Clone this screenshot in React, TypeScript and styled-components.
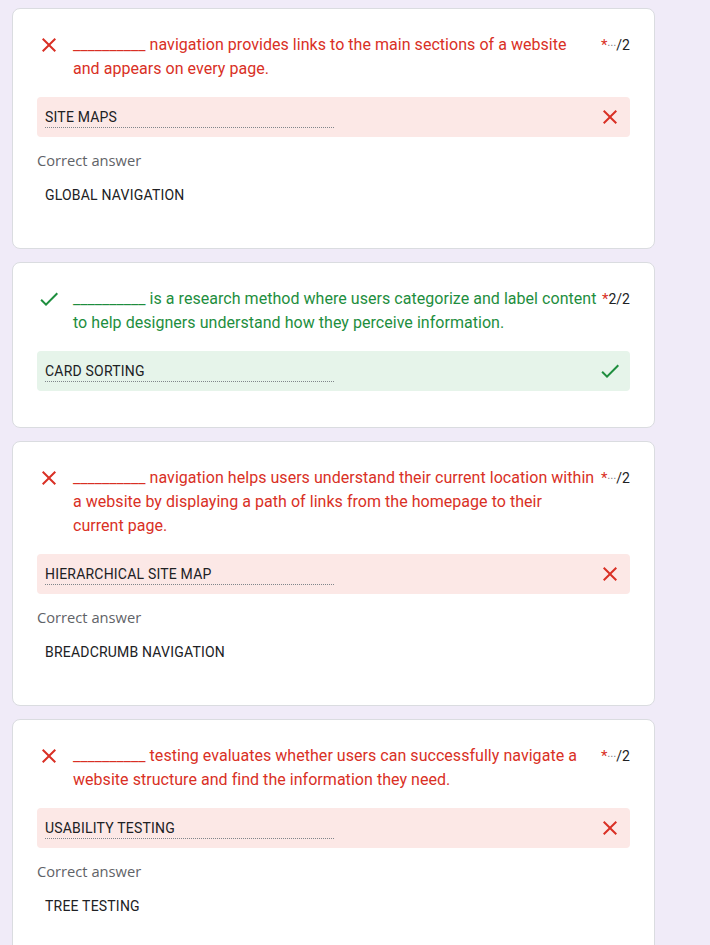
import React from "react";
import styled, { createGlobalStyle } from "styled-components";

const RED = "#d93025";
const GREEN = "#1e8e3e";

const GlobalStyle = createGlobalStyle`
  html, body {
    margin: 0;
    padding: 0;
    background: #f0ebf8;
    font-family: Roboto, "Liberation Sans", Arial, sans-serif;
  }
`;

const Page = styled.div`
  display: flex;
  flex-direction: column;
  gap: 13px;
  width: 643px;
  padding: 8px 0 0 12px;
`;

const Card = styled.section<{ $correct?: boolean }>`
  background: #fff;
  border: 1px solid #dadce0;
  border-radius: 8px;
  padding: 24px 24px ${(p) => (p.$correct ? "36px" : "24px")};
`;

const Header = styled.div`
  display: flex;
  align-items: flex-start;
`;

const IconBox = styled.span<{ $color: string }>`
  flex: none;
  width: 24px;
  height: 24px;
  display: flex;
  color: ${(p) => p.$color};
`;

const TitleIcon = styled(IconBox)`
  margin-right: 12px;
`;

const Title = styled.div<{ $color: string }>`
  flex: 1;
  min-width: 0;
  font-size: 16px;
  line-height: 24px;
  letter-spacing: 0.04px;
  white-space: nowrap;
  color: ${(p) => p.$color};
`;

const Line = styled.div``;

const Points = styled.div`
  flex: none;
  margin-left: 4px;
  white-space: nowrap;
  font-size: 14px;
  line-height: 24px;
  color: #202124;
`;

const Asterisk = styled.span`
  color: ${RED};
  font-size: 15px;
`;

const Pending = styled.span`
  font-family: "DejaVu Sans", sans-serif;
  font-size: 9px;
  color: #70757a;
  vertical-align: 2px;
`;

const AnswerBox = styled.div<{ $correct?: boolean }>`
  margin-top: 16px;
  height: 40px;
  box-sizing: border-box;
  padding: 0 8px;
  border-radius: 4px;
  display: flex;
  align-items: center;
  justify-content: space-between;
  background: ${(p) => (p.$correct ? "#e6f4ea" : "#fce8e6")};
`;

const AnswerText = styled.span`
  width: 289px;
  font-size: 14px;
  line-height: 20px;
  letter-spacing: 0.2px;
  color: #202124;
  border-bottom: 1px dotted #80868b;
`;

const CorrectLabel = styled.div`
  margin-top: 13px;
  font-family: "Open Sans", Roboto, sans-serif;
  font-size: 14.7px;
  line-height: 20px;
  color: #5f6368;
`;

const CorrectAnswer = styled.div`
  padding: 15px 8px 19px;
  font-size: 14px;
  line-height: 20px;
  letter-spacing: 0.2px;
  color: #202124;
`;

const CloseIcon = () => (
  <svg width="24" height="24" viewBox="0 0 24 24" fill="currentColor">
    <path d="M19 6.41L17.59 5 12 10.59 6.41 5 5 6.41 10.59 12 5 17.59 6.41 19 12 13.41 17.59 19 19 17.59 13.41 12z" />
  </svg>
);

const CheckIcon = () => (
  <svg width="24" height="24" viewBox="0 0 24 24" fill="currentColor">
    <path d="M9 16.17L4.83 12l-1.42 1.41L9 19 21 7l-1.41-1.41z" />
  </svg>
);

type Q = {
  lines: string[];
  answer: string;
  correct: boolean;
  correctAnswer?: string;
};

const questions: Q[] = [
  {
    lines: [
      "navigation provides links to the main sections of a website",
      "and appears on every page.",
    ],
    answer: "SITE MAPS",
    correct: false,
    correctAnswer: "GLOBAL NAVIGATION",
  },
  {
    lines: [
      "is a research method where users categorize and label content",
      "to help designers understand how they perceive information.",
    ],
    answer: "CARD SORTING",
    correct: true,
  },
  {
    lines: [
      "navigation helps users understand their current location within",
      "a website by displaying a path of links from the homepage to their",
      "current page.",
    ],
    answer: "HIERARCHICAL SITE MAP",
    correct: false,
    correctAnswer: "BREADCRUMB NAVIGATION",
  },
  {
    lines: [
      "testing evaluates whether users can successfully navigate a",
      "website structure and find the information they need.",
    ],
    answer: "USABILITY TESTING",
    correct: false,
    correctAnswer: "TREE TESTING",
  },
];

const Question = ({ q }: { q: Q }) => {
  const color = q.correct ? GREEN : RED;
  return (
    <Card $correct={q.correct}>
      <Header>
        <TitleIcon $color={color}>{q.correct ? <CheckIcon /> : <CloseIcon />}</TitleIcon>
        <Title $color={color}>
          {q.lines.map((l, i) => (
            <Line key={i}>{i === 0 ? `__________ ${l}` : l}</Line>
          ))}
        </Title>
        <Points>
          <Asterisk>*</Asterisk>
          {q.correct ? "2" : <Pending>⋯</Pending>}/2
        </Points>
      </Header>
      <AnswerBox $correct={q.correct}>
        <AnswerText>{q.answer}</AnswerText>
        <IconBox $color={color}>{q.correct ? <CheckIcon /> : <CloseIcon />}</IconBox>
      </AnswerBox>
      {q.correctAnswer && (
        <>
          <CorrectLabel>Correct answer</CorrectLabel>
          <CorrectAnswer>{q.correctAnswer}</CorrectAnswer>
        </>
      )}
    </Card>
  );
};

export default function App() {
  return (
    <>
      <GlobalStyle />
      <Page>
        {questions.map((q, i) => (
          <Question key={i} q={q} />
        ))}
      </Page>
    </>
  );
}
